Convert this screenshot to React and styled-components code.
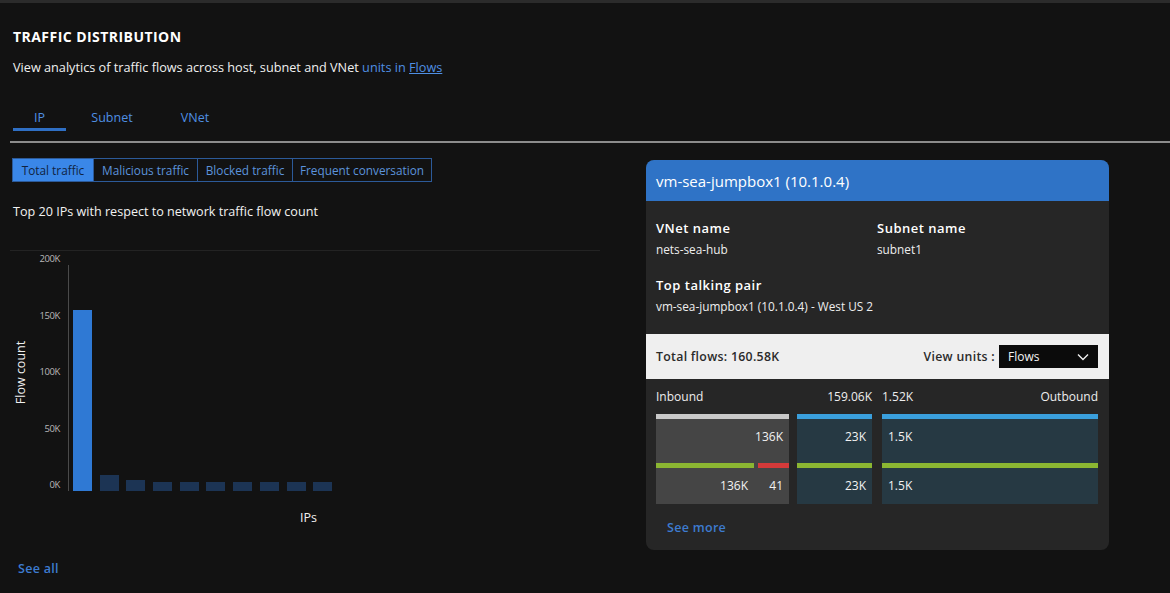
import styled, { createGlobalStyle } from "styled-components";

const GlobalStyle = createGlobalStyle`
  html, body {
    margin: 0;
    padding: 0;
    background: #121212;
  }
  body {
    font-family: "Open Sans", "Noto Sans", sans-serif;
    color: #f2f2f2;
  }
`;

const Page = styled.div`
  width: 1170px;
  height: 593px;
  overflow: hidden;
  box-sizing: border-box;
  border-top: 3px solid #2b2b2b;
  background: #121212;
  padding: 0 0 0 12px;
`;

const Title = styled.h1`
  margin: 0;
  padding-top: 25px;
  padding-left: 1px;
  font-size: 14px;
  font-weight: 700;
  letter-spacing: 0.45px;
  line-height: 18px;
  color: #ffffff;
`;

const Subtitle = styled.p`
  margin: 12px 0 0 1px;
  font-size: 12.7px;
  line-height: 18px;
  color: #f0f0f0;
`;

const Link = styled.a`
  color: #4f8fe3;
  text-decoration: ${(p) => (p.$underline ? "underline" : "none")};
`;

const Tabs = styled.div`
  display: flex;
  margin-top: 33px;
  border-bottom: 2px solid #8c8c8c;
  margin-left: -2px;
`;

const Tab = styled.div`
  width: ${(p) => p.$w}px;
  box-sizing: border-box;
  padding: 0 0 1px;
  text-align: center;
  font-size: 12.5px;
  line-height: 18px;
  color: #4f8fe3;
  border-bottom: 3px solid ${(p) => (p.$active ? "#2f6fc4" : "transparent")};
  margin-bottom: 10px;
  margin-left: ${(p) => p.$ml || 0}px;
`;

const Body = styled.div`
  display: grid;
  grid-template-columns: 588px 463px;
  column-gap: 46px;
  margin-top: 15px;
`;

const Left = styled.div`
  display: flex;
  flex-direction: column;
`;

const ButtonGroup = styled.div`
  display: flex;
  align-self: flex-start;
  border: 1px solid #2c5a99;
`;

const FilterButton = styled.div`
  width: ${(p) => p.$w}px;
  box-sizing: border-box;
  height: 22px;
  line-height: 22px;
  text-align: center;
  font-size: 11.8px;
  background: ${(p) => (p.$active ? "#3a87e8" : "transparent")};
  color: ${(p) => (p.$active ? "#10233f" : "#5c93dc")};
  border-left: ${(p) => (p.$first ? "none" : "1px solid #2c5a99")};
`;

const ChartCaption = styled.div`
  margin-top: 21px;
  padding-left: 1px;
  font-size: 12.6px;
  line-height: 18px;
  color: #f2f2f2;
`;

const FaintRule = styled.div`
  height: 1px;
  background: #232323;
  margin: 29px 0 0 -2px;
`;

const Chart = styled.div`
  display: flex;
  margin-top: 14px;
  height: 226px;
`;

const AxisTitleWrap = styled.div`
  width: 18px;
  display: flex;
  align-items: center;
  justify-content: center;
  padding-bottom: 12px;
`;

const AxisTitle = styled.div`
  transform: rotate(-90deg);
  white-space: nowrap;
  font-size: 12.5px;
  color: #f0f0f0;
`;

const YLabels = styled.div`
  width: 30px;
  display: flex;
  flex-direction: column;
  justify-content: space-between;
  align-items: flex-end;
  margin-top: -12px;
  padding-right: 8px;
`;

const YLabel = styled.span`
  font-size: 9.5px;
  line-height: 12px;
  color: #b8b8b8;
  letter-spacing: -0.4px;
`;

const Plot = styled.div`
  display: flex;
  align-items: flex-end;
  gap: 7.7px;
  padding-left: 4px;
  border-left: 1px solid #4a4a4a;
  height: 100%;
`;

const Bar = styled.div`
  width: 19px;
  background: ${(p) => (p.$main ? "#2f79d4" : "#1c3454")};
`;

const XTitle = styled.div`
  margin: 18px 0 0 288px;
  font-size: 12.5px;
  color: #f0f0f0;
`;

const SeeLink = styled.a`
  display: block;
  margin: ${(p) => p.$m || 0};
  font-size: 12.5px;
  font-weight: 600;
  color: #3d7bd0;
  letter-spacing: 0.3px;
`;

const Card = styled.div`
  margin-top: 2px;
  width: 463px;
  height: 390px;
  background: #262626;
  border-radius: 8px;
  overflow: hidden;
  display: flex;
  flex-direction: column;
`;

const CardHeader = styled.div`
  height: 41px;
  flex-shrink: 0;
  background: #2f73c6;
  padding-left: 10px;
  display: flex;
  align-items: center;
  font-size: 15px;
  color: #ffffff;
`;

const InfoGrid = styled.div`
  display: grid;
  grid-template-columns: 221px 1fr;
  row-gap: 19px;
  padding: 18px 10px 20px;
`;

const Field = styled.div`
  grid-column: ${(p) => (p.$wide ? "1 / span 2" : "auto")};
`;

const FieldLabel = styled.div`
  font-size: 13px;
  font-weight: 600;
  letter-spacing: 0.5px;
  line-height: 18px;
  color: #ffffff;
`;

const FieldValue = styled.div`
  margin-top: 4px;
  font-size: 11.8px;
  line-height: 16px;
  color: #eeeeee;
`;

const TotalsBand = styled.div`
  height: 45px;
  flex-shrink: 0;
  background: #efefef;
  display: flex;
  align-items: center;
  justify-content: space-between;
  padding: 0 11px 0 10px;
  color: #2a2a2a;
`;

const BandText = styled.span`
  font-size: 12.3px;
  font-weight: 600;
  letter-spacing: 0.3px;
`;

const UnitPicker = styled.div`
  display: flex;
  align-items: center;
  gap: 4px;
`;

const Select = styled.div`
  width: 99px;
  height: 23px;
  box-sizing: border-box;
  background: #0b0b0b;
  color: #f4f4f4;
  display: flex;
  align-items: center;
  justify-content: space-between;
  padding: 0 9px;
  font-size: 12px;
`;

const FlowHead = styled.div`
  display: grid;
  grid-template-columns: 133px 8px 75px 10px 1fr;
  padding: 10px 11px 0 10px;
  font-size: 12px;
  line-height: 16px;
  color: #eeeeee;
`;

const HeadCell = styled.span`
  grid-column: ${(p) => p.$col};
  display: flex;
  justify-content: space-between;
`;

const Blocks = styled.div`
  display: grid;
  grid-template-columns: 133px 75px 1fr;
  column-gap: 8px;
  padding: 9px 11px 0 10px;
  & > :last-child {
    margin-left: 2px;
  }
`;

const Block = styled.div`
  height: 90px;
  background: ${(p) => (p.$gray ? "#454545" : "#263943")};
  border-top: 5px solid ${(p) => (p.$gray ? "#c9c9c9" : "#3a9fdc")};
  box-sizing: border-box;
  display: flex;
  flex-direction: column;
`;

const BlockRow = styled.div`
  height: 34px;
  display: flex;
  align-items: center;
  justify-content: ${(p) => (p.$start ? "flex-start" : "flex-end")};
  padding-left: ${(p) => (p.$start ? 6 : 0)}px;
  padding-right: ${(p) => (p.$start ? 0 : 6)}px;
  font-size: 12px;
  color: #f2f2f2;
`;

const Seg = styled.div`
  display: flex;
  gap: 4px;
  margin-top: 10px;
`;

const SegLine = styled.div`
  height: 5px;
  flex: ${(p) => p.$flex};
  background: ${(p) => (p.$red ? "#d43a3a" : "#8bb632")};
`;

const Num = styled.span`
  width: ${(p) => p.$w || "auto"};
  text-align: right;
`;

const CardFooter = styled.div`
  padding: 15px 0 0 21px;
`;

const Chevron = () => (
  <svg width="12" height="8" viewBox="0 0 12 8" fill="none">
    <path d="M1 1.5L6 6.5L11 1.5" stroke="#f0f0f0" strokeWidth="1.4" />
  </svg>
);

const bars = [160, 14, 9.7, 8, 8, 8, 8, 8, 8, 8];
const yTicks = ["200K", "150K", "100K", "50K", "0K"];

export default function App() {
  return (
    <Page>
      <GlobalStyle />
      <Title>TRAFFIC DISTRIBUTION</Title>
      <Subtitle>
        View analytics of traffic flows across host, subnet and VNet{" "}
        <Link>units in</Link> <Link $underline>Flows</Link>
      </Subtitle>

      <Tabs>
        <Tab $w={53} $ml={3} $active>IP</Tab>
        <Tab $w={68} $ml={12}>Subnet</Tab>
        <Tab $w={58} $ml={20}>VNet</Tab>
      </Tabs>

      <Body>
        <Left>
          <ButtonGroup>
            <FilterButton $active $first $w={80}>Total traffic</FilterButton>
            <FilterButton $w={104}>Malicious traffic</FilterButton>
            <FilterButton $w={95}>Blocked traffic</FilterButton>
            <FilterButton $w={139}>Frequent conversation</FilterButton>
          </ButtonGroup>

          <ChartCaption>Top 20 IPs with respect to network traffic flow count</ChartCaption>
          <FaintRule />

          <Chart>
            <AxisTitleWrap>
              <AxisTitle>Flow count</AxisTitle>
            </AxisTitleWrap>
            <YLabels>
              {yTicks.map((t) => (
                <YLabel key={t}>{t}</YLabel>
              ))}
            </YLabels>
            <Plot>
              {bars.map((v, i) => (
                <Bar key={i} $main={i === 0} style={{ height: `${(v / 200) * 226}px` }} />
              ))}
            </Plot>
          </Chart>
          <XTitle>IPs</XTitle>
          <SeeLink $m="34px 0 0 6px">See all</SeeLink>
        </Left>

        <Card>
          <CardHeader>vm-sea-jumpbox1 (10.1.0.4)</CardHeader>
          <InfoGrid>
            <Field>
              <FieldLabel>VNet name</FieldLabel>
              <FieldValue>nets-sea-hub</FieldValue>
            </Field>
            <Field>
              <FieldLabel>Subnet name</FieldLabel>
              <FieldValue>subnet1</FieldValue>
            </Field>
            <Field $wide>
              <FieldLabel>Top talking pair</FieldLabel>
              <FieldValue>vm-sea-jumpbox1 (10.1.0.4) - West US 2</FieldValue>
            </Field>
          </InfoGrid>

          <TotalsBand>
            <BandText>Total flows: 160.58K</BandText>
            <UnitPicker>
              <BandText>View units :</BandText>
              <Select>
                <span>Flows</span>
                <Chevron />
              </Select>
            </UnitPicker>
          </TotalsBand>

          <FlowHead>
            <HeadCell $col="1 / span 3">
              <span>Inbound</span>
              <span>159.06K</span>
            </HeadCell>
            <HeadCell $col="5">
              <span>1.52K</span>
              <span>Outbound</span>
            </HeadCell>
          </FlowHead>

          <Blocks>
            <Block $gray>
              <BlockRow>136K</BlockRow>
              <Seg>
                <SegLine $flex="98 0 0" />
                <SegLine $flex="31 0 0" $red />
              </Seg>
              <BlockRow>
                <Num>136K</Num>
                <Num $w="35px">41</Num>
              </BlockRow>
            </Block>
            <Block>
              <BlockRow>23K</BlockRow>
              <Seg>
                <SegLine $flex="1" />
              </Seg>
              <BlockRow>23K</BlockRow>
            </Block>
            <Block>
              <BlockRow $start>1.5K</BlockRow>
              <Seg>
                <SegLine $flex="1" />
              </Seg>
              <BlockRow $start>1.5K</BlockRow>
            </Block>
          </Blocks>

          <CardFooter>
            <SeeLink>See more</SeeLink>
          </CardFooter>
        </Card>
      </Body>
    </Page>
  );
}
